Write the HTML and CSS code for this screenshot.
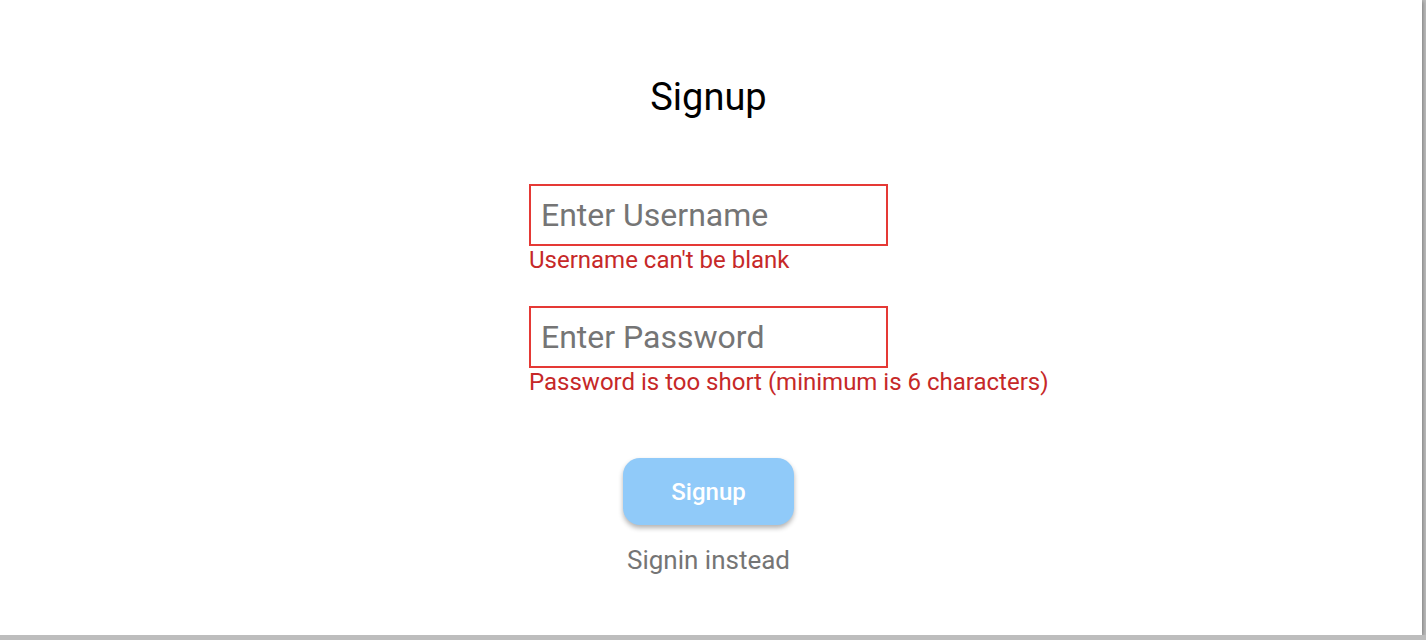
FILE: index.html
```html
<!DOCTYPE html>
<html>
<head>
<meta charset="utf-8">
<link rel="stylesheet" href="styles.css">
</head>
<body>
<div class="app">
  <main class="page">
    <h1 class="title">Signup</h1>
    <form class="form">
      <div class="field">
        <input class="input" type="text" placeholder="Enter Username">
        <div class="error">Username can't be blank</div>
      </div>
      <div class="field">
        <input class="input" type="password" placeholder="Enter Password">
        <div class="error">Password is too short (minimum is 6 characters)</div>
      </div>
    </form>
    <button class="btn" type="button">Signup</button>
    <a class="link">Signin instead</a>
  </main>
</div>
</body>
</html>
```

FILE: styles.css
```css
html, body {
  margin: 0;
  padding: 0;
  background: #bdbdbd;
  font-family: Roboto, "Liberation Sans", sans-serif;
}
.app {
  width: 1422px;
  height: 635px;
  background: #fff;
  box-shadow: 1px 1px 4px rgba(0,0,0,0.35);
  overflow: hidden;
}
.page {
  width: 1417px;
  display: flex;
  flex-direction: column;
  align-items: center;
}
.title {
  margin: 75px 0 0;
  font-size: 38px;
  font-weight: 400;
  color: #000;
  line-height: 44px;
}
.form {
  width: 359px;
  margin-top: 65px;
  display: flex;
  flex-direction: column;
  gap: 32px;
}
.field {
  display: flex;
  flex-direction: column;
}
.input {
  box-sizing: border-box;
  width: 359px;
  height: 62px;
  border: 2px solid #e53935;
  padding: 0 10px;
  font-family: Roboto, "Liberation Sans", sans-serif;
  font-size: 32px;
  outline: none;
  color: #212121;
}
.input::placeholder {
  color: #757575;
}
.error {
  color: #c62828;
  font-size: 24px;
  line-height: 28px;
  white-space: nowrap;
}
.btn {
  margin-top: 62px;
  width: 171px;
  height: 67px;
  border: none;
  border-radius: 17px;
  background: #90caf9;
  color: #fff;
  font-family: Roboto, "Liberation Sans", sans-serif;
  font-size: 24px;
  font-weight: 500;
  box-shadow: 0 3px 5px rgba(0,0,0,0.3);
}
.link {
  margin-top: 20px;
  color: #757575;
  font-size: 26px;
  line-height: 30px;
}
```
